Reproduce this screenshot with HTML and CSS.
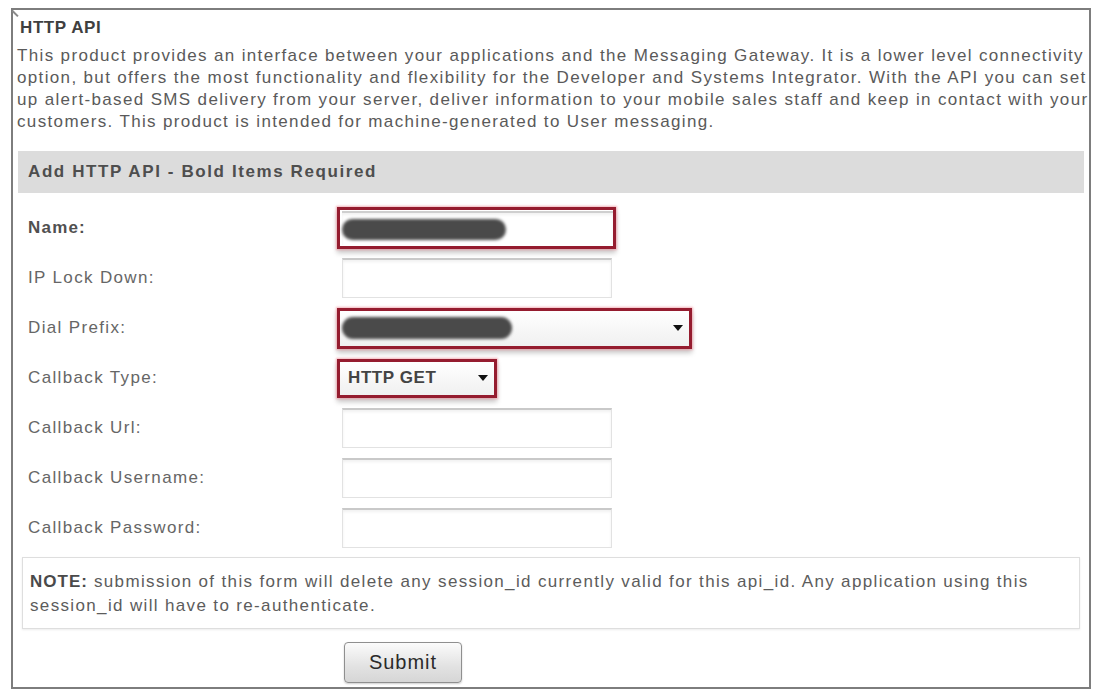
FILE: index.html
```html
<!DOCTYPE html>
<html lang="en">
<head>
<meta charset="utf-8">
<title>HTTP API</title>
<link rel="stylesheet" href="styles.css">
</head>
<body>
<div class="frame">
  <span class="tick"></span>
  <h1 class="title">HTTP API</h1>
  <p class="intro">This product provides an interface between your applications and the Messaging Gateway. It is a lower level connectivity<br>option, but offers the most functionality and flexibility for the Developer and Systems Integrator. With the API you can set<br>up alert-based SMS delivery from your server, deliver information to your mobile sales staff and keep in contact with your<br>customers. This product is intended for machine-generated to User messaging.</p>
  <div class="bar">Add HTTP API - Bold Items Required</div>
  <form class="form">
    <div class="row">
      <label class="lbl req">Name:</label>
      <div class="hl hl-name"><div class="field field-filled"><span class="redact redact-name"></span></div></div>
    </div>
    <div class="row">
      <label class="lbl">IP Lock Down:</label>
      <div class="field field-plain"></div>
    </div>
    <div class="row">
      <label class="lbl">Dial Prefix:</label>
      <div class="hl hl-dial"><div class="select select-dial"><span class="redact redact-dial"></span><span class="caret"></span></div></div>
    </div>
    <div class="row">
      <label class="lbl">Callback Type:</label>
      <div class="hl hl-type"><div class="select select-type"><span class="sel-text">HTTP GET</span><span class="caret"></span></div></div>
    </div>
    <div class="row">
      <label class="lbl">Callback Url:</label>
      <div class="field field-plain"></div>
    </div>
    <div class="row">
      <label class="lbl">Callback Username:</label>
      <div class="field field-plain"></div>
    </div>
    <div class="row">
      <label class="lbl">Callback Password:</label>
      <div class="field field-plain"></div>
    </div>
  </form>
  <div class="note"><b>NOTE:</b> submission of this form will delete any session_id currently valid for this api_id. Any application using this<br>session_id will have to re-authenticate.</div>
  <div class="actions"><button class="submit" type="button">Submit</button></div>
</div>
</body>
</html>
```

FILE: styles.css
```css
* { box-sizing: border-box; }
html, body { margin: 0; padding: 0; background: #ffffff; }
body {
  font-family: "Liberation Sans", Arial, sans-serif;
  font-size: 17px;
  letter-spacing: 1.35px;
  color: #5a5a5a;
  width: 1101px;
  height: 690px;
  overflow: hidden;
}
.frame {
  position: relative;
  margin: 8px 0 0 11px;
  width: 1080px;
  height: 681px;
  border: 2px solid #7d7d7d;
  padding: 0 3px;
}
.tick {
  position: absolute;
  left: 0;
  top: 0;
  width: 8px;
  height: 2px;
  background: #8a8a8a;
  transform: rotate(45deg);
  transform-origin: left top;
}
.title {
  margin: 0;
  padding: 7px 0 0 4px;
  font-size: 17px;
  line-height: 22px;
  font-weight: bold;
  color: #3f3f3f;
  letter-spacing: 0.6px;
}
.intro {
  margin: 6px 0 0;
  padding-left: 1px;
  line-height: 22px;
  white-space: nowrap;
}
.bar {
  margin: 18px 2px 0;
  height: 42px;
  line-height: 42px;
  background: #dcdcdc;
  padding-left: 10px;
  font-weight: bold;
  color: #4e4e4e;
  letter-spacing: 1.6px;
}
.form { padding-top: 10px; }
.row {
  display: grid;
  grid-template-columns: 309px 1fr;
  align-items: center;
  height: 50px;
  padding-left: 12px;
}
.lbl { color: #666; }
.lbl.req { font-weight: bold; color: #505050; letter-spacing: 1.2px; }
.field {
  width: 270px;
  height: 40px;
  border: 1px solid #e2e2e2;
  border-top: 2px solid #c9c9c9;
  box-shadow: inset 0 2px 3px rgba(0, 0, 0, 0.06);
  background: #fff;
}
.field-plain { margin-left: 5px; }
.hl {
  border: 3px solid #951c2f;
  box-shadow: 0 0 2px 1px rgba(240, 150, 160, 0.7), 0 4px 5px rgba(0, 0, 0, 0.22);
  background: #fff;
}
.hl-name { width: 279px; height: 42px; padding: 0 0 0 2px; display: flex; align-items: center; }
.hl-name .field {
  width: 272px;
  height: 34px;
  border: none;
  border-top: 2px solid #cfcfcf;
  display: flex;
  align-items: center;
  padding-left: 0;
}
.redact {
  display: block;
  height: 21px;
  border-radius: 11px;
  background: #4a4a4a;
  filter: blur(1.4px);
}
.redact-name { width: 164px; }
.hl-dial { width: 355px; height: 41px; }
.hl-type { width: 160px; height: 39px; }
.select {
  height: 100%;
  display: flex;
  align-items: center;
  background: linear-gradient(#ffffff, #f0f0f0);
  padding: 0 6px 0 6px;
}
.select-dial { padding-left: 2px; }
.redact-dial { width: 170px; height: 22px; }
.caret {
  margin-left: auto;
  width: 0;
  height: 0;
  border-left: 5px solid transparent;
  border-right: 5px solid transparent;
  border-top: 6px solid #111;
}
.sel-text {
  font-weight: bold;
  color: #444;
  letter-spacing: 0.6px;
  font-size: 17px;
  padding-left: 2px;
}
.note {
  margin: 4px 6px 0;
  height: 72px;
  border: 1px solid #dedede;
  box-shadow: 0 1px 2px rgba(0, 0, 0, 0.08);
  padding: 12px 0 0 7px;
  line-height: 24px;
  white-space: nowrap;
  color: #5c5c5c;
}
.note b { color: #4a4a4a; letter-spacing: 1px; }
.actions { padding: 13px 0 0 328px; }
.submit {
  width: 118px;
  height: 41px;
  font-family: "Liberation Sans", Arial, sans-serif;
  font-size: 20px;
  letter-spacing: 1px;
  color: #2a2a2a;
  border: 1px solid #8f8f8f;
  border-radius: 4px;
  background: linear-gradient(#fbfbfb, #e2e2e2 60%, #d6d6d6);
  box-shadow: 0 1px 2px rgba(0, 0, 0, 0.2);
  padding: 0;
}
```
